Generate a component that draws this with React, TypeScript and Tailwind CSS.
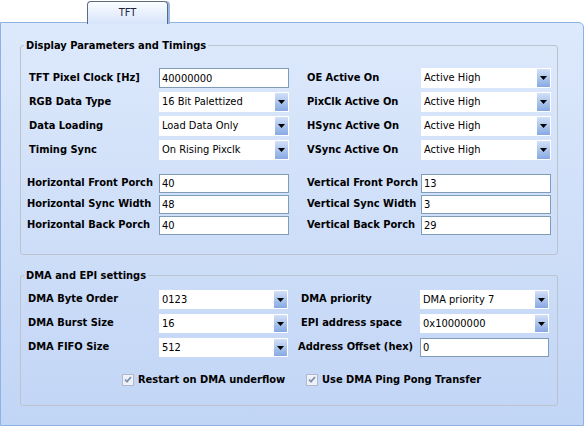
import React from 'react';

const FONT = "font-['DejaVu_Sans_Condensed','DejaVu_Sans',sans-serif]";

const Caret = () => (
    <svg width="7" height="4" viewBox="0 0 7 4"><path d="M0 0h7L3.5 4z" fill="#000" /></svg>
);

const Select: React.FC<{ value: string; w?: string }> = ({ value, w = 'w-[130px]' }) => (
    <div className={`${w} h-full bg-white border border-white flex items-stretch`}>
        <span className="flex-1 pl-[2px] text-[11px] leading-[18px] text-black whitespace-nowrap overflow-hidden">{value}</span>
        <div className="w-[13px] bg-gradient-to-b from-[#d3e0f7] to-[#87a9e3] flex items-center justify-center">
            <Caret />
        </div>
    </div>
);

const TextBox: React.FC<{ value: string; w?: string }> = ({ value, w = 'w-[130px]' }) => (
    <div className={`${w} h-full bg-white border border-[#7f9db9] pl-[2px] text-[11px] leading-[17px] text-black flex items-center`}>
        {value}
    </div>
);

const Check: React.FC<{ label: string }> = ({ label }) => (
    <div className="flex items-center gap-[4px]">
        <svg width="12" height="12" viewBox="0 0 12 12">
            <rect x="0.5" y="0.5" width="11" height="11" fill="#eef2f8" stroke="#b0bccd" />
            <path d="M3 5.5l2 2.2L9 3" fill="none" stroke="#7f90b0" strokeWidth="1.8" />
        </svg>
        <span className="text-[11px] font-bold text-black">{label}</span>
    </div>
);

const Label: React.FC<{ text: string; w: string }> = ({ text, w }) => (
    <span className={`${w} shrink-0 text-[11px] font-bold text-black whitespace-nowrap`}>{text}</span>
);

export default function App() {
    const topRows = [
        { l: 'TFT Pixel Clock [Hz]', v: '40000000', text: true, r: 'OE Active On', rv: 'Active High' },
        { l: 'RGB Data Type', v: '16 Bit Palettized', r: 'PixClk Active On', rv: 'Active High' },
        { l: 'Data Loading', v: 'Load Data Only', r: 'HSync Active On', rv: 'Active High' },
        { l: 'Timing Sync', v: 'On Rising Pixclk', r: 'VSync Active On', rv: 'Active High' },
    ];
    const porchRows = [
        { l: 'Horizontal Front Porch', v: '40', r: 'Vertical Front Porch', rv: '13' },
        { l: 'Horizontal Sync Width', v: '48', r: 'Vertical Sync Width', rv: '3' },
        { l: 'Horizontal Back Porch', v: '40', r: 'Vertical Back Porch', rv: '29' },
    ];
    const dmaRows = [
        { l: 'DMA Byte Order', v: '0123', r: 'DMA priority', rv: 'DMA priority 7' },
        { l: 'DMA Burst Size', v: '16', r: 'EPI address space', rv: '0x10000000' },
        { l: 'DMA FIFO Size', v: '512', r: 'Address Offset (hex)', rv: '0', text: true },
    ];

    return (
        <div className={`w-[584px] h-[426px] bg-white ${FONT} select-none`}>
            {/* tab strip */}
            <div className="h-[23px] pl-[87px] pt-[1px] flex">
                <div className="relative z-10 w-[81px] h-[23px] rounded-t-[4px] border border-b-0 border-[#5d6a80] bg-gradient-to-b from-[#fbfdff] to-[#d6e4fa] shadow-[2px_0_0_#9ab8e6] flex items-start justify-center pt-[3px]">
                    <span className="text-[11px] text-[#1c2440]">TFT</span>
                </div>
            </div>

            {/* main panel */}
            <div className="-mt-[1px] h-[404px] border border-[#8eb2e6] rounded-tr-[5px] bg-gradient-to-b from-[#dde9fc] to-[#c1d5f5] px-[19px] pt-[16px]">
                <fieldset className="w-[538px] border border-[#bcc3cc] rounded-[3px] pl-[8px] pt-[16px] pb-[19px]">
                    <legend className="-ml-[5px] px-[2px] text-[11px] leading-[13px] font-bold text-black">Display Parameters and Timings</legend>
                    <div className="flex flex-col gap-[4px]">
                        {topRows.map(row => (
                            <div key={row.l} className="flex items-center h-[20px]">
                                <Label text={row.l} w="w-[130px]" />
                                {row.text ? <TextBox value={row.v} /> : <Select value={row.v} />}
                                <div className="w-[18px]" />
                                <Label text={row.r} w="w-[114px]" />
                                <Select value={row.rv} />
                            </div>
                        ))}
                    </div>
                    <div className="flex flex-col gap-[2px] mt-[14px] -ml-[2px]">
                        {porchRows.map(row => (
                            <div key={row.l} className="flex items-center h-[19px]">
                                <Label text={row.l} w="w-[132px]" />
                                <TextBox value={row.v} />
                                <div className="w-[18px]" />
                                <Label text={row.r} w="w-[114px]" />
                                <TextBox value={row.rv} />
                            </div>
                        ))}
                    </div>
                </fieldset>

                <fieldset className="mt-[14px] w-[538px] border border-[#bcc3cc] rounded-[3px] pl-[7px] pt-[8px] pb-[18px]">
                    <legend className="-ml-[4px] px-[2px] text-[11px] leading-[13px] font-bold text-black">DMA and EPI settings</legend>
                    <div className="flex flex-col gap-[5px]">
                        {dmaRows.map(row => (
                            <div key={row.l} className="flex items-center h-[19px]">
                                <Label text={row.l} w="w-[131px]" />
                                <Select value={row.v} w="w-[129px]" />
                                <div className="w-[13px]" />
                                <span className="w-[119px] shrink-0 flex">
                                    <span className={`text-[11px] font-bold text-black whitespace-nowrap ${row.text ? '-ml-[3px]' : ''}`}>{row.r}</span>
                                </span>
                                {row.text ? <TextBox value={row.rv} w="w-[129px]" /> : <Select value={row.rv} w="w-[129px]" />}
                            </div>
                        ))}
                    </div>
                    <div className="mt-[16px] h-[14px] flex items-center pl-[94px]">
                        <div className="w-[184px]"><Check label="Restart on DMA underflow" /></div>
                        <Check label="Use DMA Ping Pong Transfer" />
                    </div>
                </fieldset>
            </div>
        </div>
    );
}
